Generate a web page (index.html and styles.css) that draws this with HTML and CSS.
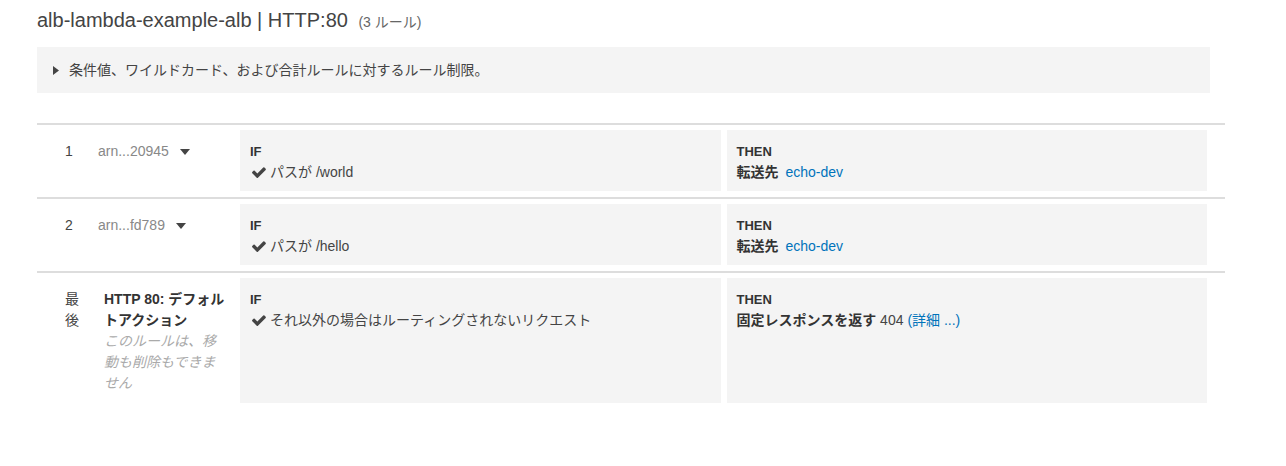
FILE: index.html
```html
<!DOCTYPE html>
<html lang="ja">
<head>
<meta charset="utf-8">
<link rel="stylesheet" href="styles.css">
</head>
<body>
<div class="page">
  <h1 class="title">alb-lambda-example-alb | HTTP:80 <span class="count">(3 ルール)</span></h1>
  <div class="notice">
    <svg class="tri-right" width="6" height="9" viewBox="0 0 6 9"><path d="M0 0 L6 4.5 L0 9 Z" fill="#444"/></svg>
    <span>条件値、ワイルドカード、および合計ルールに対するルール制限。</span>
  </div>

  <div class="rules">
    <div class="rule">
      <div class="num">1</div>
      <div class="name"><span class="arn">arn...20945</span><svg class="caret" width="10" height="6" viewBox="0 0 10 6"><path d="M0 0 H10 L5 6 Z" fill="#444"/></svg></div>
      <div class="cell">
        <div class="label">IF</div>
        <div class="line"><svg class="check" width="14" height="11" viewBox="120 360 1560 1110"><path d="M1671 566q0 40-28 68l-724 724-136 136q-28 28-68 28t-68-28l-136-136-362-362q-28-28-28-68t28-68l136-136q28-28 68-28t68 28l294 295 656-657q28-28 68-28t68 28l136 136q28 28 28 68z" fill="#444"/></svg>パスが /world</div>
      </div>
      <div class="cell">
        <div class="label">THEN</div>
        <div class="line"><b>転送先</b><a class="link">echo-dev</a></div>
      </div>
    </div>

    <div class="rule">
      <div class="num">2</div>
      <div class="name"><span class="arn">arn...fd789</span><svg class="caret" width="10" height="6" viewBox="0 0 10 6"><path d="M0 0 H10 L5 6 Z" fill="#444"/></svg></div>
      <div class="cell">
        <div class="label">IF</div>
        <div class="line"><svg class="check" width="14" height="11" viewBox="120 360 1560 1110"><path d="M1671 566q0 40-28 68l-724 724-136 136q-28 28-68 28t-68-28l-136-136-362-362q-28-28-28-68t28-68l136-136q28-28 68-28t68 28l294 295 656-657q28-28 68-28t68 28l136 136q28 28 28 68z" fill="#444"/></svg>パスが /hello</div>
      </div>
      <div class="cell">
        <div class="label">THEN</div>
        <div class="line"><b>転送先</b><a class="link">echo-dev</a></div>
      </div>
    </div>

    <div class="rule">
      <div class="num">最後</div>
      <div class="name default">
        <div class="dname">HTTP 80: デフォルトアクション</div>
        <div class="dnote">このルールは、移動も削除もできません</div>
      </div>
      <div class="cell">
        <div class="label">IF</div>
        <div class="line"><svg class="check" width="14" height="11" viewBox="120 360 1560 1110"><path d="M1671 566q0 40-28 68l-724 724-136 136q-28 28-68 28t-68-28l-136-136-362-362q-28-28-28-68t28-68l136-136q28-28 68-28t68 28l294 295 656-657q28-28 68-28t68 28l136 136q28 28 28 68z" fill="#444"/></svg>それ以外の場合はルーティングされないリクエスト</div>
      </div>
      <div class="cell">
        <div class="label">THEN</div>
        <div class="line"><b>固定レスポンスを返す</b> 404 <a class="link tight">(詳細 ...)</a></div>
      </div>
    </div>
  </div>
</div>
</body>
</html>
```

FILE: styles.css
```css
* { box-sizing: border-box; }
html, body { margin: 0; padding: 0; background: #fff; }
body {
  font-family: "Liberation Sans", Arial, "Noto Sans CJK JP", sans-serif;
  font-size: 14px;
  color: #444;
}
.page {
  padding: 8px 61px 40px 37px;
}
.title {
  margin: 0;
  height: 24px;
  font-size: 20px;
  line-height: 24px;
  font-weight: normal;
  color: #444;
}
.count {
  font-size: 14px;
  line-height: 1;
  color: #666;
  margin-left: 5px;
}
.notice {
  margin: 15px 15px 0 0;
  height: 46px;
  background: #f4f4f4;
  display: flex;
  align-items: center;
  padding-left: 16px;
  gap: 10px;
  line-height: 20px;
}
.tri-right { flex: none; }
.rules {
  margin-top: 30px;
}
.rule {
  border-top: 2px solid #ddd;
  padding: 5px 18px 6px 0;
  display: flex;
  gap: 6px;
  line-height: 21px;
}
.num {
  width: 55px;
  flex: none;
  padding: 11px 12px 0 28px;
}
.name {
  width: 136px;
  flex: none;
  padding-top: 11px;
  display: flex;
  align-items: flex-start;
}
.arn { color: #888; }
.caret { margin: 8px 0 0 11px; }
.name.default {
  flex-direction: column;
  padding: 11px 8px 9px 6px;
}
.dname { font-weight: bold; color: #333; }
.dnote { font-style: italic; color: #aaa; }
.cell {
  flex: 1 1 0;
  background: #f4f4f4;
  padding: 11px 10px 8px 10px;
}
.label {
  font-weight: bold;
  font-size: 13px;
  color: #333;
}
.line { white-space: nowrap; }
.line b { color: #333; }
.check { margin: 0 4px 0 2px; vertical-align: -1px; }
.link { color: #0073bb; margin-left: 7px; text-decoration: none; }
.link.tight { margin-left: 0; }
```
